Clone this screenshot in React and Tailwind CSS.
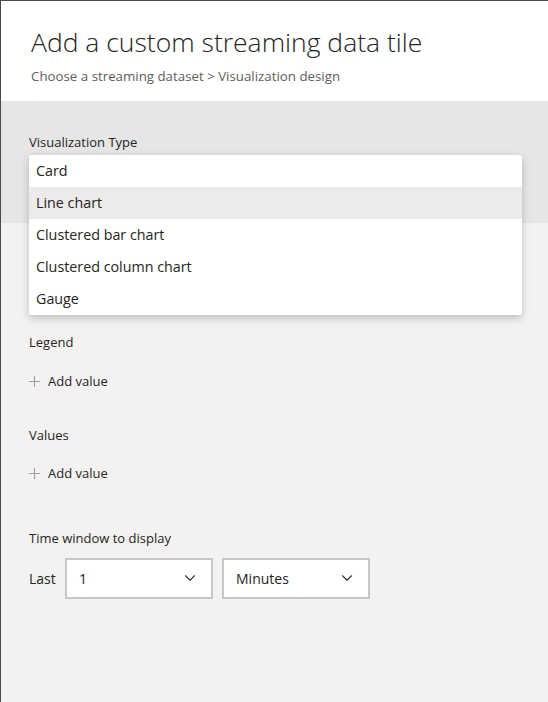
import { ChevronDown } from "lucide-react";

const font = { fontFamily: '"Open Sans", "Noto Sans", sans-serif' };

const options = ["Card", "Line chart", "Clustered bar chart", "Clustered column chart", "Gauge"];

const AddValue = () => (
  <div className="flex items-center gap-2 text-[13px] text-[#252423]">
    <svg width="11" height="11" viewBox="0 0 12 12" className="text-[#a19f9d]">
      <path d="M6 0v12M0 6h12" stroke="currentColor" strokeWidth="1.2" />
    </svg>
    <span>Add value</span>
  </div>
);

const Select = ({ value, width }) => (
  <div
    className={`flex items-center justify-between h-[41px] ${width} bg-white border-2 border-[#c8c6c4] pl-3 pr-3 text-[14px] text-[#252423]`}
  >
    <span>{value}</span>
    <ChevronDown size={18} strokeWidth={1.5} className="text-[#323130]" />
  </div>
);

export default function App() {
  return (
    <div
      className="w-[548px] h-[702px] bg-[#f3f2f1] border-l border-t border-[#4b4b4b] flex flex-col overflow-hidden"
      style={font}
    >
      {/* header */}
      <div className="bg-white h-[100px] pl-[30px] pt-[24px]">
        <h1 className="text-[26.5px] font-light text-[#252423] leading-[34px]">
          Add a custom streaming data tile
        </h1>
        <p className="mt-[8px] text-[13.3px] text-[#605e5c]">
          Choose a streaming dataset &gt; Visualization design
        </p>
      </div>

      {/* visualization type */}
      <div className="relative bg-[#e6e6e6] h-[122px] px-[28px] pt-[32px]">
        <div className="text-[13px] text-[#252423]">Visualization Type</div>
        <div className="mt-[5px] h-[44px] mr-[24px] bg-white border-r-[3px] border-[#e8b800]" />

        <div className="absolute left-[28px] top-[54px] w-[493px] bg-white rounded-[2px] shadow-[0_3px_8px_rgba(0,0,0,0.22)] z-10 text-[14.3px] text-[#252423]">
          {options.map((o, i) => (
            <div
              key={o}
              className={`h-[32px] flex items-center px-[7px] ${i === 1 ? "bg-[#edebe9]" : ""}`}
            >
              {o}
            </div>
          ))}
        </div>
      </div>

      {/* fields */}
      <div className="px-[28px] pt-[110px] flex flex-col">
        <div className="text-[13px] text-[#252423]">Legend</div>
        <div className="mt-[19px]">
          <AddValue />
        </div>
        <div className="mt-[35px] text-[13px] text-[#252423]">Values</div>
        <div className="mt-[18px]">
          <AddValue />
        </div>
        <div className="mt-[46px] text-[13px] text-[#252423]">Time window to display</div>
        <div className="mt-[9px] flex items-center gap-[9px]">
          <span className="text-[14px] text-[#252423] w-[27px]">Last</span>
          <Select value="1" width="w-[148px]" />
          <Select value="Minutes" width="w-[148px]" />
        </div>
      </div>
    </div>
  );
}
